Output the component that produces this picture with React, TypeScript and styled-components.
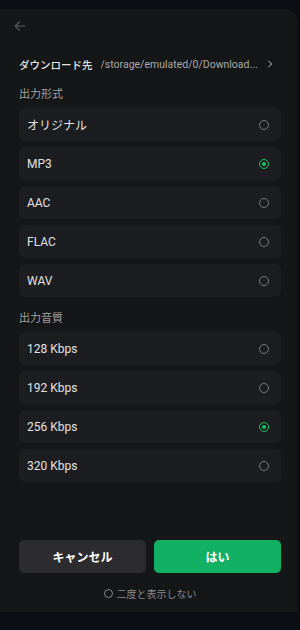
import React, { useState } from "react";
import styled, { createGlobalStyle } from "styled-components";

const formats = ["オリジナル", "MP3", "AAC", "FLAC", "WAV"];
const qualities = ["128 Kbps", "192 Kbps", "256 Kbps", "320 Kbps"];

const GlobalStyle = createGlobalStyle`
  html, body {
    margin: 0;
    padding: 0;
    background: #0b0e12;
    font-family: Roboto, "Noto Sans CJK JP", sans-serif;
  }
  * {
    box-sizing: border-box;
  }
`;

const Radio = ({ checked }: { checked: boolean }) => (
  <RadioMark $checked={checked}>{checked && <span />}</RadioMark>
);

const App = () => {
  const [format, setFormat] = useState(1);
  const [quality, setQuality] = useState(2);

  return (
    <Page>
      <GlobalStyle />
      <Sheet>
        <TopBar>
          <svg width="14" height="14" viewBox="0 0 24 24" fill="none" stroke="#5a5c60" strokeWidth="2" strokeLinecap="round" strokeLinejoin="round">
            <path d="M20 12H4" />
            <path d="M11 5l-7 7 7 7" />
          </svg>
        </TopBar>

        <PathRow>
          <PathLabel>ダウンロード先</PathLabel>
          <PathValue>/storage/emulated/0/Download...</PathValue>
          <svg width="10" height="10" viewBox="0 0 24 24" fill="none" stroke="#c8c8c8" strokeWidth="2.4" strokeLinecap="round" strokeLinejoin="round">
            <path d="M9 5l7 7-7 7" />
          </svg>
        </PathRow>

        <SectionTitle $gap={14}>出力形式</SectionTitle>
        <OptionList>
          {formats.map((item, idx) => (
            <Option key={item} onClick={() => setFormat(idx)}>
              <span>{item}</span>
              <Radio checked={format === idx} />
            </Option>
          ))}
        </OptionList>

        <SectionTitle $gap={13}>出力音質</SectionTitle>
        <OptionList>
          {qualities.map((item, idx) => (
            <Option key={item} onClick={() => setQuality(idx)}>
              <span>{item}</span>
              <Radio checked={quality === idx} />
            </Option>
          ))}
        </OptionList>

        <Footer>
          <ButtonRow>
            <Button>キャンセル</Button>
            <Button $primary>はい</Button>
          </ButtonRow>
          <DontShow>
            <i />
            二度と表示しない
          </DontShow>
        </Footer>
      </Sheet>
    </Page>
  );
};

export default App;

const Page = styled.div`
  width: 300px;
  height: 630px;
  padding-top: 9px;
  background: #0b0e12;
  overflow: hidden;
`;

const Sheet = styled.div`
  width: 297px;
  height: 603px;
  background: #151618;
  border-top-right-radius: 12px;
  padding: 0 16px 0 19px;
  display: flex;
  flex-direction: column;
`;

const TopBar = styled.div`
  height: 32px;
  display: flex;
  align-items: center;
  margin-left: -6px;
  padding-top: 2px;
`;

const PathRow = styled.div`
  display: flex;
  align-items: center;
  margin-top: 15px;
  height: 16px;
  padding-right: 6px;
  white-space: nowrap;

  svg {
    margin-left: auto;
    flex-shrink: 0;
  }
`;

const PathLabel = styled.span`
  font-family: "Noto Sans CJK JP", sans-serif;
  font-size: 10.5px;
  font-weight: 500;
  color: #e6e6e6;
  margin-right: 8px;
  flex-shrink: 0;
`;

const PathValue = styled.span`
  font-size: 10.5px;
  color: #a9a9ab;
  overflow: hidden;
`;

const SectionTitle = styled.div<{ $gap: number }>`
  font-family: "Noto Sans CJK JP", sans-serif;
  font-size: 11px;
  color: #a0a0a2;
  margin-top: ${({ $gap }) => $gap}px;
  margin-bottom: 8px;
  line-height: 14px;
`;

const OptionList = styled.div`
  display: flex;
  flex-direction: column;
  gap: 6px;
  width: 262px;
`;

const Option = styled.div`
  height: 33px;
  border-radius: 6px;
  background: #1c1d20;
  display: flex;
  align-items: center;
  justify-content: space-between;
  padding: 0 12px 0 8px;
  font-size: 12px;
  color: #e2e2e2;
  cursor: pointer;
`;

const RadioMark = styled.span<{ $checked: boolean }>`
  width: 10px;
  height: 10px;
  border-radius: 50%;
  border: 1.3px solid ${({ $checked }) => ($checked ? "#17c26b" : "#7a7a7c")};
  display: flex;
  align-items: center;
  justify-content: center;

  span {
    width: 4px;
    height: 4px;
    border-radius: 50%;
    background: #17c26b;
  }
`;

const Footer = styled.div`
  margin-top: auto;
  padding-bottom: 11px;
  width: 262px;
`;

const ButtonRow = styled.div`
  display: flex;
  gap: 8px;
`;

const Button = styled.button<{ $primary?: boolean }>`
  flex: 1;
  height: 33px;
  border: none;
  border-radius: 5px;
  background: ${({ $primary }) => ($primary ? "#12b062" : "#2c2c2e")};
  color: #ffffff;
  font-family: "Noto Sans CJK JP", sans-serif;
  font-size: 12px;
  font-weight: 700;
`;

const DontShow = styled.div`
  display: flex;
  align-items: center;
  justify-content: center;
  gap: 4px;
  margin-top: 13px;
  font-family: "Noto Sans CJK JP", sans-serif;
  font-size: 10px;
  color: #8a8a8c;

  i {
    width: 9px;
    height: 9px;
    border-radius: 50%;
    border: 1.2px solid #8a8a8c;
  }
`;
